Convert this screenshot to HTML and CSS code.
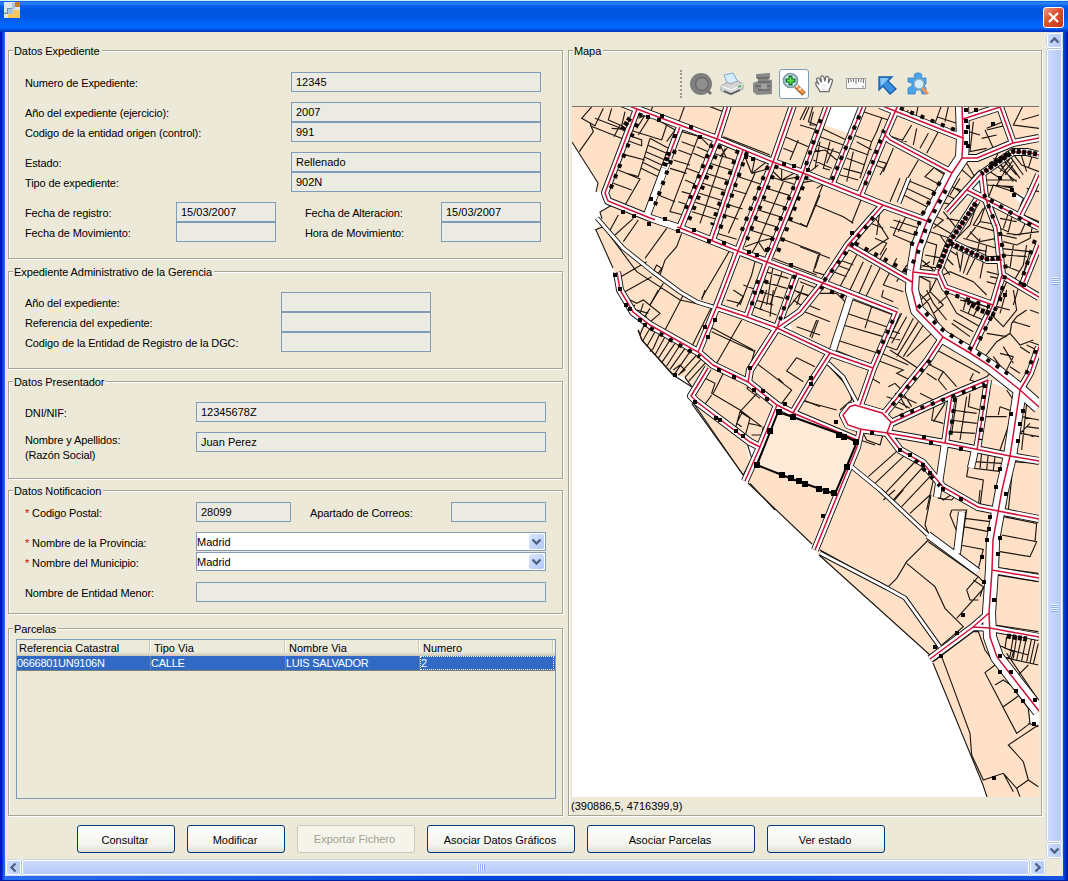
FILE: index.html
```html
<!DOCTYPE html>
<html lang="es">
<head>
<meta charset="utf-8">
<title>Expediente</title>
<link rel="stylesheet" href="styles.css">
</head>
<body>
<div class="window">
  <header class="titlebar">
    <svg class="app-icon" width="16" height="16" viewBox="0 0 16 16" shape-rendering="crispEdges"><path fill="#dfe5e6" d="M0 0h16v16H0z"/><path fill="#bc861d" d="M11 0h5v5h-5z"/><path fill="#ffc65a" d="M9 8h7v8H4v-4h5z"/><path fill="#a9c4df" d="M3 7h6v5H0v-2h3zM8 1h3v6H8z"/><path fill="none" stroke="#6e8fae" d="M0 11.500h4M3.500 7v4M3 6.500h5"/></svg>
    <button class="close"><svg width="19" height="19" viewBox="0 0 19 19"><path d="M5 5l9 9M14 5l-9 9" stroke="#fff" stroke-width="2.300"/></svg></button>
  </header>
  <div class="body">
    <div class="content">
      <div class="columns">
        <div class="left">
          <section class="panel p1">
            <h2>Datos Expediente</h2>
            <div class="row"><label class="l266">Numero de Expediente:</label><div class="field w250">12345</div></div>
            <div class="row gap"><label class="l266">Año del expediente (ejercicio):</label><div class="field w250">2007</div></div>
            <div class="row"><label class="l266">Codigo de la entidad origen (control):</label><div class="field w250">991</div></div>
            <div class="row gap"><label class="l266">Estado:</label><div class="field w250">Rellenado</div></div>
            <div class="row"><label class="l266">Tipo de expediente:</label><div class="field w250">902N</div></div>
            <div class="row gap"><label class="l151">Fecha de registro:</label><div class="field w100">15/03/2007</div><label class="mid">Fecha de Alteracion:</label><div class="field w100">15/03/2007</div></div>
            <div class="row"><label class="l151">Fecha de Movimiento:</label><div class="field w100"></div><label class="mid">Hora de Movimiento:</label><div class="field w100"></div></div>
          </section>
          <section class="panel p2">
            <h2>Expediente Administrativo de la Gerencia</h2>
            <div class="row"><label class="l256">Año del expediente:</label><div class="field w150"></div></div>
            <div class="row"><label class="l256">Referencia del expediente:</label><div class="field w150"></div></div>
            <div class="row"><label class="l256">Codigo de la Entidad de Registro de la DGC:</label><div class="field w150"></div></div>
          </section>
          <section class="panel p3">
            <h2>Datos Presentador</h2>
            <div class="row"><label class="l171">DNI/NIF:</label><div class="field w350">12345678Z</div></div>
            <div class="row gap"><label class="l171 two">Nombre y Apellidos:<br>(Razón Social)</label><div class="field w350">Juan Perez</div></div>
          </section>
          <section class="panel p4">
            <h2>Datos Notificacion</h2>
            <div class="row"><label class="l171"><i>*</i> Codigo Postal:</label><div class="field w95">28099</div><label class="mid2">Apartado de Correos:</label><div class="field w95"></div></div>
            <div class="row gap"><label class="l171"><i>*</i> Nombre de la Provincia:</label><div class="combo">Madrid<span><svg width="15" height="15" viewBox="0 0 15 15"><path d="M3.500 5.500l4 4 4-4" fill="none" stroke="#4d6185" stroke-width="2.400"/></svg></span></div></div>
            <div class="row"><label class="l171"><i>*</i> Nombre del Municipio:</label><div class="combo">Madrid<span><svg width="15" height="15" viewBox="0 0 15 15"><path d="M3.500 5.500l4 4 4-4" fill="none" stroke="#4d6185" stroke-width="2.400"/></svg></span></div></div>
            <div class="row gap"><label class="l171">Nombre de Entidad Menor:</label><div class="field w350"></div></div>
          </section>
          <section class="panel p5">
            <h2>Parcelas</h2>
            <div class="table">
              <div class="thead"><b>Referencia Catastral</b><b>Tipo Via</b><b>Nombre Via</b><b>Numero</b></div>
              <div class="trow"><span>0666801UN9106N</span><span>CALLE</span><span>LUIS SALVADOR</span><span class="focus">2</span></div>
            </div>
          </section>
        </div>
        <section class="panel map-panel">
          <h2>Mapa</h2>
          <div class="toolbar">
            <div class="handle"></div>
            <button class="tool"><svg width="24" height="24" viewBox="0 0 24 24"><circle cx="12" cy="12" r="11" fill="#7f7f7f"/><circle cx="13" cy="12" r="6.500" fill="#8f8f8f" stroke="#6c6c6c" stroke-width="1.500"/><path d="M17 17l5 5" stroke="#777" stroke-width="3"/></svg></button>
            <button class="tool"><svg width="24" height="24" viewBox="0 0 24 24"><path d="M4 3l9-2 5 9-10 3z" fill="#d6ebfc" stroke="#79aed7"/><path d="M1 14l7-4 2 2 8-3 5 3v5l-12 6-10-4z" fill="#d4d6d6" stroke="#8f9494" stroke-width=".8"/><path d="M1 14l11 4 11-6" fill="none" stroke="#fff"/><path d="M4 19l7 3 9-4" stroke="#555" fill="none" stroke-width="1.500"/><path d="M18 15l3-1.500" stroke="#3db53d" stroke-width="1.500"/></svg></button>
            <button class="tool"><svg width="24" height="24" viewBox="0 0 24 24"><path d="M5 2l14-1v5l-3 1 5 1v14l-15 1-4-3V11l5-2V7L5 6z" fill="#898989"/><path d="M6 6h12M7 10h12M4 14h16M7 18h12" stroke="#6f6f6f" stroke-width="2"/><path d="M10 12h6v5h-6z" fill="#a2a2a2"/></svg></button>
            <button class="tool on"><svg width="24" height="24" viewBox="0 0 24 24"><path d="M14 14l8 8" stroke="#9d6333" stroke-width="5"/><path d="M14.500 14l7 7" stroke="#ff9a43" stroke-width="3"/><path d="M14 15l2-2M17 18l2-2" stroke="#fff" stroke-width="1.500"/><circle cx="8.500" cy="8.500" r="7" fill="#bdeaf2" stroke="#8397a3" stroke-width="1.700"/><path d="M6.500 3.500h4v3h3v4h-3v3h-4v-3h-3v-4h3z" fill="#126b18"/><path d="M8.500 5v7M5 8.500h7" stroke="#5be64b" stroke-width="1.800"/></svg></button>
            <button class="tool"><svg class="hand" width="20" height="20" viewBox="0 0 24 24"><path d="M7 21C6 17 2 15 2 11c1-2 3 0 4 2L3 7c0-3 3-3 4 0l2 3-1-6c1-3 3-2 4 0l1 5 1-5c1-2 4-1 4 1l-1 6 2-4c2-2 4 0 3 2l-2 6c-1 3-2 3-2 6z" fill="#fff" stroke="#6b6b6b" stroke-width="1.500"/><path d="M9 15c2-2 4-2 6 0M9 19h6" stroke="#ccc" fill="none"/></svg></button>
            <button class="tool"><svg width="24" height="24" viewBox="0 0 24 24"><path d="M2.500 6.500h19v10h-19z" fill="#f8f8f8" stroke="#999"/><path d="M4.500 7v4M7 7v3M9.500 7v3M12 7v5M14.500 7v3M17 7v3M19.500 7v4" stroke="#777" stroke-width="1"/><path d="M18 14h2v1.500h-2z" fill="#aaa"/></svg></button>
            <button class="tool"><svg width="24" height="24" viewBox="0 0 24 24"><path d="M4 5h13l-4 4 8 8-6 5-7-8-4 4z" fill="#3a91e4" stroke="#155cab" stroke-width="1.300"/><path d="M5 6h9L6 14z" fill="#88c7f5"/></svg></button>
            <button class="tool"><svg width="24" height="24" viewBox="0 0 24 24"><path d="M9 6C7 2 9 1 12 1c3 0 5 1 3 5h5v6l-2 2 2 2v6h-4l-1-4h-5l-1 4H2v-6l4-2v-3l-4-1V6z" fill="#4ba4e9" stroke="#2b75be" stroke-width=".7"/><path d="M16 16l6 6" stroke="#f6924a" stroke-width="3"/><circle cx="13" cy="12" r="5" fill="#d7effa" stroke="#94abb7" stroke-width="1.500"/></svg></button>
          </div>
          <svg class="map" width="467" height="690" viewBox="572 107 467 690">
            <path class="land" d="M572 100V142L598 183L596 192L602 191L606 198L612 205L600 212L602 219L596 230L613 268L625 305L635 313L647 325L638 330L642 340L673 375L685 377L692 387L690 398L695 405L743 475L748 483L775 510L812 544L819 555L930 655L933 663L983 785L987 800H1050V100Z"/>
            <path class="white" d="M828 107H862L851 134L824 125ZM961 200l14-25 10 17zM913 280l-2 28 12 4-6-30zM985 380l16 2 12 14 3 52h-8l8-56zM972 628l14-22 5 36-7-8zM1029 709l10 2v14h-9zM782 318l-8 12 20 10-3-14zM1016 193l10 3 -4 8-7-5zM745 440l16 6-10 20z"/>
            <g class="lots" transform="translate(570 105) scale(.33333)">
              <path d="M70 0L35 40L75 62L100 10M60 55L70 80L28 140M60 62L160 102L215 122V105L180 92M125 10L115 45L155 62L165 20M75 40L180 80M125 70L190 75M132 95L150 60M200 30L180 80M205 40L232 28L290 60L315 75L290 110M240 35L205 90M225 30L200 70M180 75L275 105M240 100L205 215L170 205M160 148L225 165M145 195L210 222L165 300M130 235L185 255M240 100L295 130M232 120L290 145M228 140L285 165M222 155L280 182M218 172L275 200M213 190L265 215M290 60L275 105"/>
              <path d="M335 80L390 95L415 120M385 95L300 320L340 330M335 110L375 125M325 135L365 150M380 125L415 140M370 145L405 160M350 190L390 205M345 225L380 240M335 260L372 270M325 290L355 300M310 165L360 180M300 190L350 205M265 270L315 290M465 130L390 355M430 145l70 22M420 175l70 22M408 205l70 22M398 235l70 22M388 265l70 22M376 292l70 22M366 320l70 22M450 120l20 40M475 125l-25 30"/>
              <path d="M555 205L475 385M545 205L525 155M545 205L555 160M545 205L590 170M545 205L600 190M505 215l75 25M490 255l40 12M478 300l40 12M465 330l40 13M440 385l60 18M640 230L565 410M635 225L605 195M635 225L635 190M635 225L680 200M635 225L690 215M600 215l80 25M590 250l80 25M578 285l80 25M565 315l80 25M553 345l80 25M540 375l80 25M565 410L525 425M565 410L545 445M565 410L585 440M565 410L605 400M745 225L700 232L655 345L710 365L750 270M630 400L750 445L735 490M610 460L740 510"/>
              <path d="M190 340L135 390M145 330l-30 55M205 345L160 410M290 370L225 460M335 385L320 425L285 465L270 510M480 435L395 580M145 520L230 470M165 560L245 515M240 600L280 535M250 500L260 480L275 490L265 505ZM555 470L545 510L510 600M75 375L100 365L200 500L330 585L400 600M345 0L325 55M250 0L240 25M420 5L460 20M460 95L600 150M720 0L700 45M645 95L750 140M685 105L660 165M730 20L720 60L750 60M640 130l30 12M610 480L590 600M640 490L600 600M585 500l70 20M580 530l70 20M570 560l70 20M690 530l50 20M680 560l40 12M700 540l-20 60M520 540l40 15"/>
            </g>
            <g class="lots" transform="translate(800 105) scale(.33333)">
              <path d="M0 60L50 75M40 0L25 50L50 60M20 5L0 45M65 70L150 110M60 110L45 190M60 95L130 120M50 120L120 145M45 140L75 135L110 165M40 165L60 175L95 190M90 110L70 190L90 195M100 130L80 175M55 180l-25 20M190 20L265 45M245 40L230 80L215 110L160 90M170 110L215 135M215 110L180 220M150 130L205 150M140 160L195 180M130 190L185 205M120 210L175 225M160 140L140 230M240 110L225 180L250 190M225 165L260 175L240 210M335 60L305 110M350 70L340 120M385 85L360 130M415 80L380 145M270 55L260 90L320 110M325 15L310 40M355 0L345 50M425 0L405 55M410 35L470 55M445 5L435 50"/>
              <path d="M280 130L250 200M355 165L320 225L430 270M310 245L405 290M300 265L390 310M410 180L375 215L430 245M405 190L435 210M300 220L270 290M50 250L70 235M70 235L45 300L20 365L0 355M45 300L130 335L160 355M185 280L155 355M0 425L90 460M55 450L40 500L90 515M200 350L250 370M220 330L265 400L205 440M240 315L230 390M300 345L280 390L350 420M320 330L295 380M280 345L375 375M270 365L360 395M225 400L260 415L240 450M260 430L230 480M120 465L160 480M110 480L150 495M100 500L140 515M170 450L120 545M190 470L150 555M215 480L175 570M240 490L190 590M290 460L250 540L310 560M320 480L290 530"/>
              <path d="M520 50L510 140L560 130M505 80L540 90M560 70L610 50M555 75L580 130M600 20L620 60L560 75M545 100L590 90M670 0L640 60L717 70M665 45L717 30M470 180L515 220L540 195M500 175L530 225M480 220L450 270M600 130L570 200L600 220M580 175L650 230M590 165L640 230M600 155L650 210M610 150L660 220M620 140L670 210M630 135L665 180L717 200M660 140L680 200M700 140L685 190M620 190L590 240L640 250M560 225L650 225M555 240L640 245M680 150L717 140M600 170L580 160M610 185L590 175M630 160L600 200M640 165L610 205M615 210l25-30M450 240L480 260L440 320M470 250L500 265M430 265L470 285M415 290L460 300M400 330L430 345L400 370M430 320L470 370M440 340L490 350M390 380L450 400M380 410L410 420L400 480M375 450L430 460M350 480L420 490M365 465L400 495M350 495L390 470M420 390L440 420M400 355L460 390"/>
              <path d="M530 300L510 360L470 400M550 310L520 360L590 380M540 350L500 400M560 290L540 350L600 360M510 380L540 410L590 400M490 400L590 430M480 420L560 440M540 400L530 450M560 420L555 460M470 440L480 490M490 440L480 500M510 445L490 505M530 450L500 510M440 430L470 450M430 450L460 480M420 470L450 510M550 470L540 520M560 500L600 510M570 515L595 520M560 530L595 540M430 510L450 500L520 530L560 570M350 510L390 530V560L355 590M410 520L390 560L430 600M600 300L640 320L625 380L600 370M630 310L610 370M650 330L680 345L660 390L620 385M700 350L690 400L650 420L610 410M605 390L650 400M600 430L690 440M610 450L680 455M640 420L630 490M610 480L660 500M680 420L670 480L640 530M620 520L650 530M690 440L660 540M600 340L650 350M717 260L680 250M690 290L670 330L717 350M640 260l30 20-10 25M560 290l20-50 60 20M655 550L640 600M620 530L590 600M717 380L640 390"/>
            </g>
            <g class="lots" transform="translate(570 290) scale(.33333)">
              <path d="M170 25L200 40L220 30L270 70L230 105M195 45L175 60M200 60L235 70M220 40L205 85M240 55L215 95M185 75L230 80M265 0L240 45M340 15L285 120M425 50L365 170M405 0L395 30M320 0L380 35L430 45M220 110l-10 25M240 115l-22 38M255 125L230 170M270 130L250 175L240 185M285 140L255 195M300 150L265 205M315 160L275 218M330 165L290 228M345 175L300 238M360 185L315 250M380 195L330 250M395 205L345 262M410 215L355 275M310 240L330 225L345 240L325 255M205 120L215 150L310 255M345 262L365 290M425 125L555 185M515 90L440 220M420 110L550 180M555 180L540 230M560 220L665 300L635 340M625 265L640 280M680 203L650 243L700 275M680 203L735 230M680 110L750 135M740 90L720 140M750 60L700 40M405 265L435 280L425 310L510 360L575 410M460 250L430 310M425 315L400 350M570 300L510 365L495 420M530 295L550 310L570 325M530 295L545 285M510 365L540 385L525 440M575 410L560 405L535 400M545 435L575 435L580 410M515 370L500 400L515 410M700 330L750 350M365 340L520 555L545 505L530 455M540 580L615 660M490 0l30 20-20 30M470 30L510 40M590 0L570 60M610 0L600 80M550 50L620 75M555 30L610 45M545 75L610 100M690 10L650 60M670 0L720 20M670 30L700 50"/>
            </g>
            <g class="lots" transform="translate(800 290) scale(.33333)">
              <path d="M0 60L90 95M55 90L35 145M60 10L110 10L140 40L130 80M160 30L280 75M140 70L260 110M130 105L250 140M110 150L235 190M215 50L195 115M120 135L100 190M105 180L215 225M250 0L245 20L280 35M350 0L385 40L415 100M380 0L400 40L440 90M365 50L390 25M400 70L430 45M430 0L470 70M415 40L440 20M460 90L520 125M470 70L540 110M480 60L550 90M455 100L510 140M490 30L560 50M500 20L490 60M520 30L505 70M540 40L520 80M480 30l40 10M580 80L610 110L650 60L640 0M590 50L630 60M560 130L620 140M680 60L650 80L635 100L630 130L590 155L555 200M630 130L660 165L700 150M640 95L690 110M690 60L717 70M600 190L640 200M610 170L640 220M580 200L610 240M640 200L620 240M550 240L590 215M690 155L717 165M680 165L710 180M660 170L690 190M600 0l-30 90M620 0l-20 70"/>
              <path d="M305 70L270 140M320 80L275 160M340 85L290 180M355 95L290 200M370 105L310 200M395 130L320 200M265 120L300 130M262 140L300 150M250 165L290 180M245 190L325 225M270 180L370 245L345 270M230 210L310 240L290 250L330 270M215 265L240 280M265 290L285 280L305 300M260 320L290 330M285 310L350 340M275 325L330 355M300 320L320 355M310 310L335 350M270 345L310 360M395 225L380 215M410 180L540 250M380 220L430 245L470 290M430 245L415 270L440 300M380 250L410 270M360 310L410 335L440 320M85 225L125 270L150 300L155 330L120 360M0 330L110 360M405 330L395 390L430 400M400 395L435 340M470 325L455 430M500 320L480 450M455 360L530 370M450 390L530 400M445 425L525 430M510 310L505 350L540 360M555 380L620 380M600 350L640 365L635 380M600 350L595 375M620 300L640 330L635 380L600 480M680 340L665 480M665 380L717 390M690 400L660 430L717 440M680 410L717 415M670 430L700 440"/>
              <path d="M190 430L200 450L240 465L250 430M180 450L225 465M300 475L205 560M320 490L225 580M350 510L255 610M370 530L280 630M390 560L305 650M400 570L380 660M405 610L430 630L460 610M505 530L500 560L550 570L540 650M530 490L520 535L605 545M520 515L605 520M545 490L540 535M565 490L560 540M585 500L580 540M640 515L625 660M640 515L717 520M155 530L300 660M520 250L510 270L540 280L570 250M600 230L640 260M630 230L660 250"/>
            </g>
            <g class="lots" transform="translate(740 490) scale(.33333)">
              <path d="M465 0L430 30M490 0L460 35M570 15L510 70M573 15L555 105L565 130M590 0L595 25L635 30L650 15M720 0L715 50L755 55M565 150L500 215L470 265L445 290M500 220L585 290L615 355L670 410L600 470M240 180L440 290M565 155L715 260L740 285L650 385M715 260L680 300L690 330L715 330M700 270L730 290L720 320M635 60L680 60L650 160M635 60L630 75L655 135M680 60L660 195L715 235M675 85L750 95M670 110L745 125M660 165L730 178L715 235M790 80L890 100L885 155M785 135L890 155L870 200L780 185M785 235L895 250M770 255L895 275M765 405L895 425M770 255L762 405M805 75L895 90M800 0L795 70"/>
              <path d="M800 440L795 475L865 495M775 465L820 485L815 505L780 500M820 440L810 500M830 440L820 505M845 440L830 510M860 440L845 512M875 445L860 515M885 450L870 520M895 460L880 522M780 500L895 525M800 490L895 630M865 525L830 560M605 500L635 580L690 730L695 795L730 870L790 850L830 895L865 870L895 890M580 515L700 425L715 425L735 480L865 655L870 700L830 730L735 548L765 525M765 585L790 570L820 590M790 650L835 618M895 705L805 765L850 815L865 870M830 895L840 920M790 850L820 905M865 700L895 710"/>
            </g>
            <path class="edge" d="M572 142L598 183L596 192M612 205L600 212L602 219M596 230L613 268M638 330L642 340L673 375L692 387M690 398L743 475M748 483L812 544M819 555L930 655M933 663L983 785L987 797"/>
            <defs>
              <g id="streets">
                <path d="M600 95L637 109L717 139L773 162L803 173L883 205L927 221M637 109L605 193L608 201L650 218M680 127L647 215M728 105L717 139L680 228L738 251L767 262L823 283L897 312M743 150L712 240M793 105L773 162L738 251L717 306L698 352M803 173L767 262L747 317M650 218L680 228M717 307L747 317L777 328L830 353L873 368M797 273L777 328M823 283L800 312L777 328L750 370L748 382"/>
                <path d="M617 272L620 290L633 312L650 325L698 352L713 365L748 382L777 405L793 413L857 440M708 368L691 396L697 402L750 442L760 447M777 405L760 447L745 481M830 353L812 381L793 413M897 312L873 368L860 405M943 337L928 360L885 413M891 423L952 395L988 380M952 395L945 443M988 380L977 450M887 433L945 443L1010 456L1039 461M887 433L900 450L923 463L943 487L978 507L1039 519M861 429L857 447L815 550M992 570L1039 578M973 627L990 628L1039 637M989 613L973 627L930 659"/>
                <path d="M880 105L895 111L963 138M898 105L885 135L860 195M863 105L832 183M828 105L803 173M885 135L890 140L952 173M962 158L977 158L1013 143L1039 138M963 119L1000 107L1013 143M1039 155L1027 152L1013 152L980 175L947 212M967 190L987 200L1039 227M982 172L985 197L997 228L1002 275L993 305L970 353M977 200L950 242L938 272L945 288L993 305M950 242L987 260L1002 260M913 272L938 275M1002 275L1039 297M1039 175L1030 195L1020 215M1039 245L1022 287M883 205L848 245L823 283M848 245L912 282M1039 347L1030 373L1020 390M850 406.500L855 405L882 413L891 422L887 433L860 429L848 425L843 415Z"/>
              </g>
              <path id="avenues" d="M962 105L963 138L962 158L952 173L927 221L917 248L913 272L912 290L917 310L943 337L970 353L990 366L1020 390L1039 407M1020 390L1010 456L1002 490L993 540L992 570L989 613L990 637L997 657L1039 711"/>
              <path id="lanes" d="M597 218L623 248L653 272L680 292L697 302L713 307M828 363L843 377L858 405M820 553L887 588L905 598L940 647M852 467L880 490L928 535M909 178l-10 25M680 292L697 302"/>
              <path id="wide" d="M850 297L833 350M928 535L978 572M945 443L937 497M962 512L957 553M747 317L775 328M975 450L971 468"/>
            </defs>
            <use href="#lanes" class="case c4"/><use href="#wide" class="case c8"/><use href="#streets" class="case c8"/><use href="#avenues" class="case c13"/>
            <use href="#lanes" class="case f4"/><use href="#wide" class="case f8"/><use href="#streets" class="case f8"/><use href="#avenues" class="case f13"/>
            <path class="white" d="M855 402L882 410L894 422L890 436L860 432L846 428L840 415L848 404Z"/>
            <use href="#streets" class="center"/><use href="#avenues" class="center"/>
            <path class="case f6" d="M669 158L647 215M655 219.500L677 227.500"/>
            <path class="dash" d="M641 113L610 190M675 150L655 205M720 145L687 225M712 144L683 215M747 152L718 235M738 150L712 225M777 165L747 240M768 166L740 235M807 176L778 252M798 176L768 250M758 280L750 312M767 280L758 300M795 275L780 320M806 165L823 113M832 180L861 112M865 185L884 130M855 243L908 272M824 281L875 215M820 287L845 297M650 328L700 357"/>
            <path class="dash" d="M900 108L955 130M946 190L927 225L917 255L909 270M940 182L922 215L910 250M1000 232L1006 270L1000 300L977 345M918 305L940 328L1010 375M966 145L966 107M990 200L1036 228M945 292L990 307M893 320L875 360M930 360L890 408M900 416L985 384M955 398L950 438M985 384L980 440M984 194L996 225M1035 240L1020 285M1036 350L1025 377M915 460L940 486"/>
            <path class="dense" d="M1037 154L1014 151L981 174M976 203L948 244L938 270M950 243L985 259L1000 258M990 165L1010 153M995 315l-15-5-12-8M669 152L664 168M622 130L630 118M805 437h8M1007 636l20 3"/>
            <path class="dot" d="M648 117h0M659 120h0M662 116h0M691 127h0M700 137h0M675 136h0M651 199h0M623 212h0M634 216h0M649 224h0M665 219h0M678 231h0M694 230h0M709 241h0M724 243h0M749 252h0M757 255h0M767 250h0M791 265h0M746 157h0M753 159h0M784 164h0M794 166h0M808 170h0M615 275h0M620 289h0M626 305h0M630 309h0M640 320h0M645 325h0M675 375h0M719 370h0M734 377h0M750 368h0M754 390h0M763 391h0M767 399h0M785 404h0M811 378h0M811 384h0M705 327h0M708 337h0M715 320h0M695 402h0M716 418h0M720 420h0M736 431h0M743 436h0M836 422h0M872 433h0M924 437h0M931 443h0M961 449h0M900 450h0M910 455h0M923 465h0M930 473h0M943 489h0M961 499h0M848 467h0M823 516h0M1011 414h0M1020 424h0M1018 441h0M1023 411h0M1000 469h0M996 487h0M1006 494h0M990 517h0M989 529h0M987 540h0M982 557h0M1000 538h0M998 554h0M994 600h0M984 582h0M963 615h0M957 633h0M941 656h0M935 647h0M1000 656h0M1011 672h0M1000 672h0M1016 691h0M1023 701h0M1035 700h0M1034 724h0M994 778h0M1005 295h0M1024 285h0M1012 190h0M1000 178h0M1014 195h0M852 233h0M968 127h0M968 146h0M976 110h0M993 124h0"/>
            <path class="selected" d="M778 412L757 465L782 475L800 482L835 494L857 442L840 434L793 417Z"/>
            <path class="node" d="M779 412h0M770 431h0M793 417h0M757 465h0M782 475h0M791 478h0M799 481h0M805 484h0M819 489h0M826 491h0M834 493h0M856 442h0M844 437h0M839 435h0M847 467h0"/>
          </svg>
          <p class="coords">(390886,5, 4716399,9)</p>
        </section>
      </div>
      <div class="buttons">
        <button class="btn b98">Consultar</button><button class="btn b98">Modificar</button><button class="btn b118 off">Exportar Fichero</button><button class="btn b148">Asociar Datos Gráficos</button><button class="btn b168">Asociar Parcelas</button><button class="btn b118">Ver estado</button>
      </div>
    </div>
    <div class="vscroll"><div class="arrow"><svg width="15" height="15" viewBox="0 0 15 15"><path d="M3.500 9.500l4-4 4 4"/></svg></div><div class="thumb"><div class="grip"></div><div class="grip"></div></div><div class="arrow"><svg width="15" height="15" viewBox="0 0 15 15"><path d="M3.500 5.500l4 4 4-4"/></svg></div></div>
    <div class="hscroll"><div class="arrow"><svg width="15" height="15" viewBox="0 0 15 15"><path d="M9.500 3.500l-4 4 4 4"/></svg></div><div class="thumb"><div class="grip"></div></div><div class="arrow"><svg width="15" height="15" viewBox="0 0 15 15"><path d="M5.500 3.500l4 4-4 4"/></svg></div></div>
    <div class="corner"></div>
  </div>
</div>
</body>
</html>
```
FILE: styles.css
```css
* { box-sizing: border-box; }
body { margin: 0; font: 11px/13px "Liberation Sans", Arial, sans-serif; color: #000; }
button { font: inherit; padding: 0; border: 0; background: none; }
h2, p { margin: 0; font-size: 11px; font-weight: normal; }
svg { display: block; }

.window { width: 1068px; height: 881px; padding: 0 5px 4px; display: flex; flex-direction: column; border-top: 1px solid #c9f0f6; background: linear-gradient(90deg, #0011b8 0, #0019cf 2px, #0b50e0 3px, #2a6cf0 5px, #0046d8 50%, #1553e2 1063px, #0030cc 1065px, #001a9c 1068px); border-bottom: 1px solid #001ea0; }
.titlebar { height: 31px; flex: none; margin: 0 -5px; padding: 1px 4px 0; display: flex; justify-content: space-between; background: linear-gradient(#0a5ae0 0, #2f87fb 2px, #0560ea 5px, #0054e0 9px, #0055e5 16px, #0066fb 23px, #0066ff 27px, #0048d8 29px, #0036bf 31px); }
.close { width: 21px; height: 21px; margin-top: 5px; border: 1px solid #fff; border-radius: 3px; background: linear-gradient(135deg, #ee9a7d, #dc5030 45%, #c23710); }

.body { flex: 1; display: grid; grid-template-columns: 1041px 17px; grid-template-rows: 827px 17px; background: #ece9d8; }
.content { display: flex; flex-direction: column; padding: 18px 0 0 3px; }
.columns { display: flex; align-items: flex-start; gap: 5px; }
.left { width: 555px; display: flex; flex-direction: column; }
.panel { border: 1px solid #a5a394; box-shadow: 1px 1px 0 #fff, inset 1px 1px 0 #fff; }
.panel h2 { width: max-content; height: 13px; margin: -7px 0 0 4px; padding: 1px 2px 0 1px; background: #ece9d8; white-space: nowrap; letter-spacing: -.08px; }
.p1 { height: 209px; }
.p2 { height: 98px; margin-top: 12px; }
.p3 { height: 98px; margin-top: 12px; }
.p4 { height: 124px; margin-top: 11px; }
.p5 { height: 188px; margin-top: 14px; }
.row { display: flex; height: 20px; margin-left: 16px; }
h2 + .row { margin-top: 15px; }
.p2 h2 + .row, .p3 h2 + .row { margin-top: 14px; }
.p4 h2 + .row { margin-top: 5px; }
.row.gap { margin-top: 10px; }
.row label { flex: none; padding-top: 5px; white-space: nowrap; letter-spacing: -.13px; }
.row label.two { padding-top: 1px; line-height: 15px; }
.row i { color: #d00000; font-style: normal; }
.l266 { width: 266px; } .l256 { width: 256px; } .l171 { width: 171px; } .l151 { width: 151px; }
.mid { width: 165px; padding-left: 29px; }
.mid2 { width: 160px; padding-left: 19px; }
.field { height: 20px; padding: 3px 4px; border: 1px solid #7f9db9; background: #ebebe4; }
.w250 { width: 250px; } .w100 { width: 100px; } .w150 { width: 150px; } .w350 { width: 350px; } .w95 { width: 95px; }
.combo { width: 350px; height: 19px; padding: 3px 1px 3px 0; display: flex; justify-content: space-between; border: 1px solid #7f9db9; background: #fff; }
.combo span { width: 15px; height: 15px; margin-top: -2px; border-radius: 2px; background: linear-gradient(135deg, #dce7ff, #b0c7f7); }

.table { width: 540px; height: 160px; margin: 4px 0 0 7px; border: 1px solid #7f9db9; }
.thead, .trow { display: grid; grid-template-columns: 134px 135px 134px 134px; width: 538px; }
.thead { height: 16px; background: linear-gradient(#ebeadb 12px, #cbc7b8 16px); }
.thead b { height: 12px; font-weight: normal; line-height: 13px; padding: 2px 0 0 2px; border-right: 1px solid #fff; box-shadow: inset -1px 0 0 #cbc7b8; }
.thead b + b { padding-left: 3px; }
.trow { height: 15px; background: #316ac5; color: #fff; border-bottom: 1px solid #7f7f70; }
.trow span { padding: 1px 0 0; border-right: 1px solid #6f7f9d; line-height: 13px; letter-spacing: -.25px; }
.trow .focus { padding: 0; border: 1px dotted #fff; line-height: 12px; }

.map-panel { width: 474px; height: 766px; }
.toolbar { display: flex; align-items: center; height: 30px; margin: 12px 0 8px 111px; }
.handle { width: 2px; height: 28px; margin-right: 4px; border-left: 2px dotted #9d9a8d; }
.tool { width: 30px; height: 30px; margin-right: 1px; padding: 3px; flex: none; }
.tool.on { padding: 2px; border: 1px solid #7f9db9; border-radius: 3px; background: #fff; }
.hand { margin-left: 1px; }
.map { margin-left: 3px; background: #fff; outline: 1px solid #77766a; outline-offset: 0; clip-path: inset(-1px 0 0 0); }
.coords { padding: 3px 0 0 2px; }
.land { fill: #ffe1c8; }
.white { fill: #fff; }
.lots, .edge { fill: none; stroke: #1c1611; stroke-width: 3.4; }
.edge { stroke-width: 1.1; }
.case { fill: none; stroke: #fff; stroke-linejoin: round; }
.c4 { stroke: #111; stroke-width: 4.8; } .f4 { stroke-width: 3; }
.c8 { stroke: #111; stroke-width: 8; } .f8 { stroke-width: 6.2; }
.c13 { stroke: #111; stroke-width: 14; } .f13 { stroke-width: 12.2; }
.f6 { stroke-width: 6; }
.center { fill: none; stroke: #cf1238; stroke-width: 1.5; }
.dash { fill: none; stroke: #0c0604; stroke-width: 4; stroke-dasharray: 4 7; }
.dense { fill: none; stroke: #0c0604; stroke-width: 5; stroke-dasharray: 4 1.500; }
.dot { stroke: #0c0604; stroke-width: 4; stroke-linecap: square; }
.selected { fill: #ffead8; stroke: #000; stroke-width: 2; }
.node { stroke: #000; stroke-width: 6; stroke-linecap: square; }

.buttons { display: flex; gap: 12px; margin: 9px 0 0 69px; align-items: flex-start; }
.btn { height: 28px; padding: 2px 2px 0 0; border: 1px solid #003c74; border-radius: 3px; background: linear-gradient(#fff, #f3f3ee 75%, #dedcd2); }
.b98 { width: 98px; } .b118 { width: 118px; } .b148 { width: 148px; } .b168 { width: 168px; }
.off { padding: 0 3px 0 0; color: #a1a192; border-color: #c9c7ba; background: #f5f4ea; }

.vscroll, .hscroll { display: flex; background: #f3f2ec; padding: 1px; }
.vscroll { flex-direction: column; gap: 1px; }
.hscroll { gap: 1px; }
.arrow, .thumb { border: 1px solid #fff; border-radius: 2px; background: linear-gradient(90deg, #cddafd, #b5cbf9); }
.arrow { flex: none; width: 15px; height: 15px; box-shadow: 0 0 0 .5px #a9bce6; }
.arrow svg { margin: -1px; fill: none; stroke: #4d6185; stroke-width: 2.400; }
.thumb { flex: 1; box-shadow: 0 0 0 .5px #96b0e8; display: flex; }
.vscroll .thumb { flex-direction: column; align-items: center; padding-top: 227px; gap: 319px; }
.hscroll .thumb { align-items: center; padding-left: 454px; background: linear-gradient(#cddafd, #b5cbf9); }
.grip { width: 7px; height: 8px; background: repeating-linear-gradient(#eef4fe 0 1px, #8cb0f8 1px 2px); }
.hscroll .grip { width: 8px; height: 7px; background: repeating-linear-gradient(90deg, #eef4fe 0 1px, #8cb0f8 1px 2px); }
.corner { background: #ece9d8; }
```
